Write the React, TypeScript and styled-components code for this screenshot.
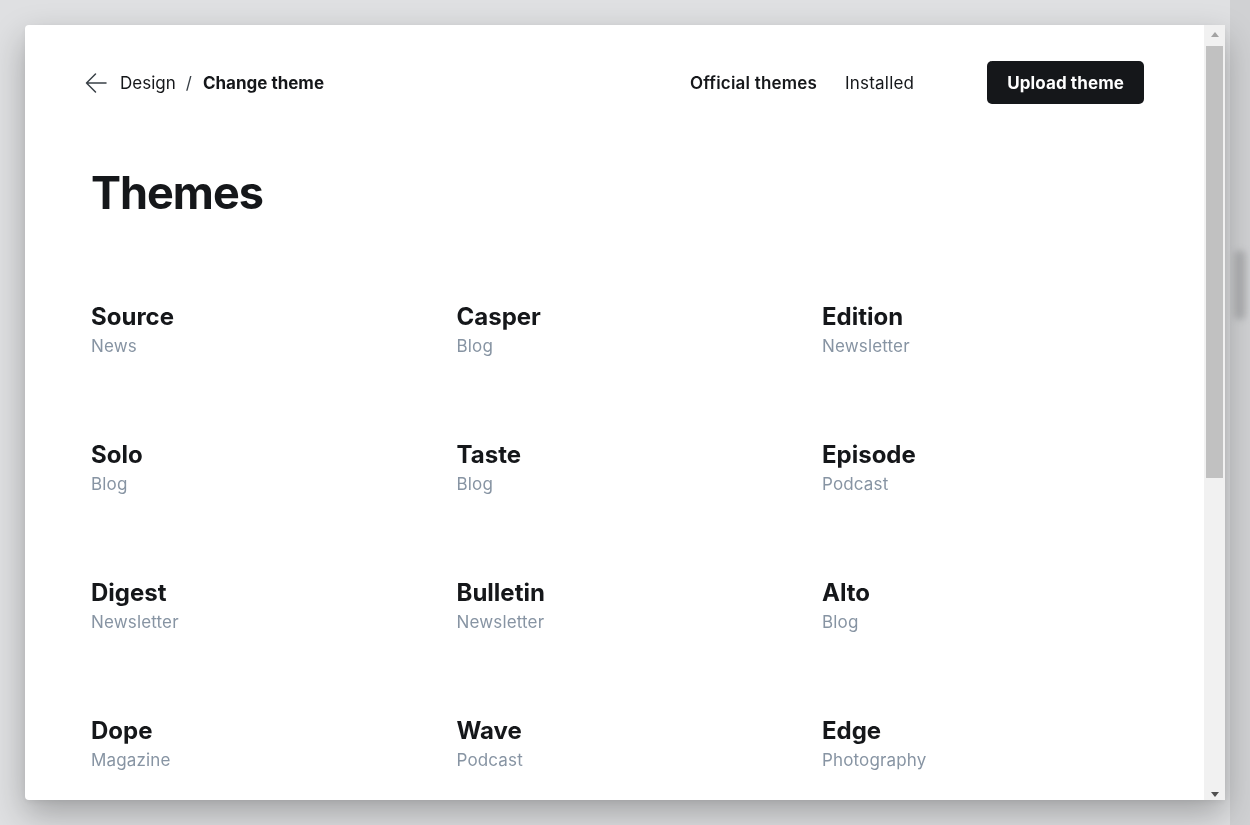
import React from 'react';
import styled, { createGlobalStyle } from 'styled-components';

const GlobalStyle = createGlobalStyle`
  * { box-sizing: border-box; }
  html, body { margin: 0; padding: 0; height: 100%; overflow: hidden; }
  body {
    font-family: Inter, "Noto Sans", "Liberation Sans", sans-serif;
    color: #15171a;
    background: #dfe0e2;
    -webkit-font-smoothing: antialiased;
  }
`;

const Backdrop = styled.div`
  width: 1250px;
  height: 825px;
  display: flex;
  background: #dfe0e2;
`;

const BackdropMain = styled.div`
  flex: 1;
`;

const BackdropScroll = styled.div`
  width: 20px;
  background: #d0d1d3;
  display: flex;
  flex-direction: column;
  align-items: center;
  padding-top: 250px;
`;

const BlurThumb = styled.div`
  width: 12px;
  height: 70px;
  border-radius: 6px;
  background: #b0b1b3;
  filter: blur(3px);
`;

/* the modal sits over the blurred admin page */
const Modal = styled.div`
  position: fixed;
  left: 25px;
  top: 25px;
  width: 1200px;
  height: 775px;
  display: flex;
  background: #fff;
  border-radius: 4px 0 0 4px;
  box-shadow: 0 14px 34px rgba(0, 0, 0, 0.28), 0 2px 6px rgba(0, 0, 0, 0.06);
  overflow: hidden;
`;

const ScrollArea = styled.div`
  flex: 1;
  overflow: hidden;
`;

const Scrollbar = styled.div`
  width: 21px;
  background: #f1f1f1;
  display: flex;
  flex-direction: column;
  align-items: center;
`;

const ArrowBtn = styled.div<{ $down?: boolean }>`
  height: 21px;
  width: 21px;
  display: flex;
  align-items: center;
  justify-content: center;
  &::before {
    content: '';
    width: 0;
    height: 0;
    border-left: 4.5px solid transparent;
    border-right: 4.5px solid transparent;
    ${(p) =>
      p.$down
        ? 'border-top: 5px solid #505050; margin-top: 10px;'
        : 'border-bottom: 5px solid #a3a3a3; margin-top: -3px;'}
  }
`;

const Thumb = styled.div`
  width: 17px;
  height: 432px;
  background: #c1c1c1;
`;

const Spacer = styled.div`
  flex: 1;
`;

const Content = styled.div`
  padding: 36px 60px 100px 60px;
`;

const Header = styled.header`
  display: flex;
  align-items: center;
  justify-content: space-between;
  height: 43px;
`;

const Breadcrumb = styled.nav`
  display: flex;
  align-items: center;
  font-size: 17px;
`;

const BackButton = styled.button`
  border: 0;
  background: none;
  padding: 0;
  margin-right: 13px;
  display: flex;
  cursor: pointer;
`;

const Crumb = styled.span<{ $current?: boolean }>`
  font-weight: ${(p) => (p.$current ? 700 : 400)};
  color: #15171a;
`;

const Sep = styled.span`
  margin: 0 11px 0 10px;
  color: #394047;
`;

const Actions = styled.div`
  display: flex;
  align-items: center;
`;

const Tab = styled.button<{ $active?: boolean }>`
  border: 0;
  background: none;
  padding: 0;
  font-family: inherit;
  font-size: 17px;
  letter-spacing: 0.2px;
  color: #15171a;
  font-weight: ${(p) => (p.$active ? 600 : 400)};
  margin-right: ${(p) => (p.$active ? '28px' : '73px')};
`;

const UploadButton = styled.button`
  height: 43px;
  padding: 0 20px;
  border: 0;
  border-radius: 5px;
  background: #15171a;
  color: #fff;
  font-family: inherit;
  font-size: 17px;
  font-weight: 700;
  letter-spacing: 0.1px;
`;

const Title = styled.h1`
  margin: 57px 0 0 6px;
  font-size: 45px;
  line-height: 64px;
  font-weight: 700;
  letter-spacing: -1px;
`;

const Grid = styled.div`
  margin: 77px 0 0 6px;
  display: grid;
  grid-template-columns: repeat(3, 322px);
  column-gap: 43.5px;
  row-gap: 82px;
`;

const ThemeCard = styled.div`
  display: flex;
  flex-direction: column;
`;

const ThemeName = styled.h3`
  margin: 0;
  font-size: 24px;
  line-height: 30px;
  font-weight: 700;
  letter-spacing: 0;
`;

const ThemeCategory = styled.span`
  margin-top: 2px;
  font-size: 17px;
  line-height: 24px;
  letter-spacing: 0.15px;
  color: #8794a3;
`;

const themes = [
  ['Source', 'News'],
  ['Casper', 'Blog'],
  ['Edition', 'Newsletter'],
  ['Solo', 'Blog'],
  ['Taste', 'Blog'],
  ['Episode', 'Podcast'],
  ['Digest', 'Newsletter'],
  ['Bulletin', 'Newsletter'],
  ['Alto', 'Blog'],
  ['Dope', 'Magazine'],
  ['Wave', 'Podcast'],
  ['Edge', 'Photography'],
];

const ArrowLeft = () => (
  <svg width="22" height="22" viewBox="0 0 22 22" fill="none">
    <path d="M21 11H1.5M10.5 2l-9 9 9 9" stroke="#394047" strokeWidth="1.5" strokeLinecap="round" strokeLinejoin="round" />
  </svg>
);

export default function App() {
  return (
    <>
      <GlobalStyle />
      <Backdrop>
        <BackdropMain />
        <BackdropScroll>
          <BlurThumb />
        </BackdropScroll>
      </Backdrop>
      <Modal>
        <ScrollArea>
          <Content>
            <Header>
              <Breadcrumb>
                <BackButton aria-label="Back">
                  <ArrowLeft />
                </BackButton>
                <Crumb>Design</Crumb>
                <Sep>/</Sep>
                <Crumb $current>Change theme</Crumb>
              </Breadcrumb>
              <Actions>
                <Tab $active>Official themes</Tab>
                <Tab>Installed</Tab>
                <UploadButton>Upload theme</UploadButton>
              </Actions>
            </Header>
            <Title>Themes</Title>
            <Grid>
              {themes.map(([name, cat]) => (
                <ThemeCard key={name}>
                  <ThemeName>{name}</ThemeName>
                  <ThemeCategory>{cat}</ThemeCategory>
                </ThemeCard>
              ))}
            </Grid>
          </Content>
        </ScrollArea>
        <Scrollbar>
          <ArrowBtn />
          <Thumb />
          <Spacer />
          <ArrowBtn $down />
        </Scrollbar>
      </Modal>
    </>
  );
}
